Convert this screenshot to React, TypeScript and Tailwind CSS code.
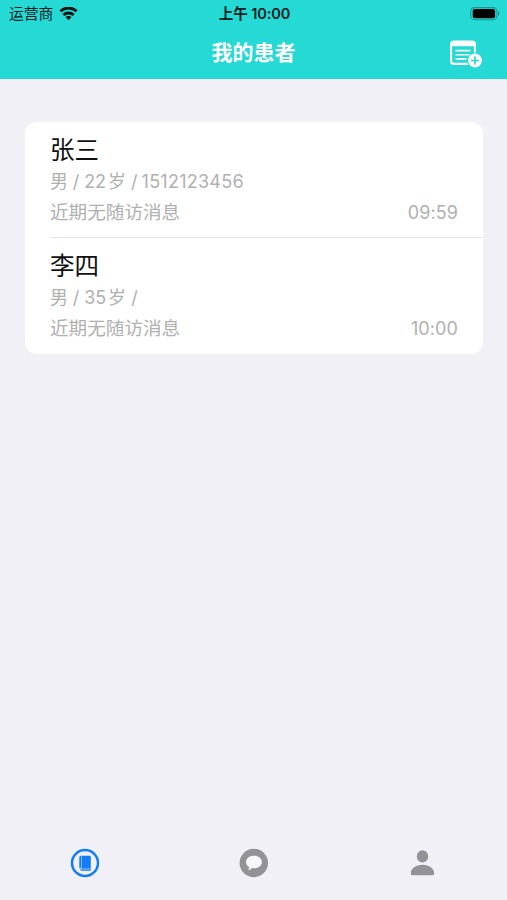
import React from 'react';

interface Patient {
  id: number;
  name: string;
  gender: string;
  age: string;
  phone: string;
  message: string;
  time: string;
}

const patients: Patient[] = [
  { id: 1, name: '张三', gender: '男', age: '22', phone: '1512123456', message: '近期无随访消息', time: '09:59' },
  { id: 2, name: '李四', gender: '男', age: '35', phone: '', message: '近期无随访消息', time: '10:00' },
];

const WifiIcon: React.FC = () => (
  <svg width="20" height="14" viewBox="0 0 20 14" fill="none" stroke="#041514" strokeWidth="2.9">
    <path d="M1.4 4.3C6.2 -0.1 12.8 -0.1 17.6 4.3" />
    <path d="M4.3 8c3-2.7 7.4-2.7 10.4 0" />
    <path d="M9.5 13.2 6.4 10.100c1.800-1.500 4.400-1.500 6.200 0z" fill="#041514" stroke="none" />
  </svg>
);

const BatteryIcon: React.FC = () => (
  <svg width="30" height="14" viewBox="0 0 30 14" fill="none">
    <rect x="0.7" y="0.6" width="26.2" height="12.2" rx="3.8" stroke="#159994" strokeWidth="1.1" />
    <rect x="2.7" y="2" width="22.4" height="9.2" rx="2" fill="#000" />
    <path d="M28 4.5c1.7.5 1.7 3.7 0 4.2z" fill="#118985" />
  </svg>
);

const AddRecordIcon: React.FC = () => (
  <svg width="34" height="28" viewBox="0 0 34 28" fill="none">
    <path d="M5 0.5h18A4 4 0 0 1 27 4.5V21a4 4 0 0 1-4 4H5a4 4 0 0 1-4-4V4.5A4 4 0 0 1 5 .5z" fill="#fff" />
    <path d="M3.1 6.3h21.8V20.5a2.3 2.3 0 0 1-2.3 2.3H5.4A2.3 2.3 0 0 1 3.1 20.5z" fill="#25d9d4" />
    <path d="M6.5 10.6h15M6.5 14.7h15M6.5 18.9h11" stroke="#fff" strokeWidth="1.6" />
    <circle cx="26" cy="20.5" r="7.9" fill="#25d9d4" />
    <circle cx="26" cy="20.5" r="6.9" fill="#fff" />
    <path d="M22 20.5h8M26 16.5v8" stroke="#25d9d4" strokeWidth="1.7" />
  </svg>
);

const PatientsTabIcon: React.FC = () => (
  <svg width="30" height="30" viewBox="0 0 30 30" fill="none">
    <circle cx="15" cy="15" r="13" stroke="#127df5" strokeWidth="2.5" />
    <path d="M11.2 7.8h8.3a1.3 1.3 0 0 1 1.3 1.3V20H11.5a1.5 1.5 0 0 0-2.2 1V9.5A1.7 1.7 0 0 1 11.2 7.8z" fill="#127df5" />
    <path d="M11.5 8v11.8" stroke="#c9defa" strokeWidth="0.6" />
    <path d="M20.4 20.8H11.5c-1.3 0-1.3 1.5 0 1.5h8.9z" fill="#8dbff8" stroke="#127df5" strokeWidth="0.9" />
  </svg>
);

const MessagesTabIcon: React.FC = () => (
  <svg width="30" height="30" viewBox="0 0 30 30">
    <circle cx="14.8" cy="15" r="14.2" fill="#929297" />
    <path
      d="M15 7.7c-4.6 0-8 2.7-8 6.2 0 2.3 1.3 4.2 3.2 5.2.1 1.1-.5 2.2-1.2 3.1 1.8-.2 3.3-.9 4.4-2.1.5.1 1 .1 1.6.1 4.6 0 7.9-2.7 7.9-6.300S19.6 7.7 15 7.7z"
      fill="#f7f6fa"
    />
  </svg>
);

const ProfileTabIcon: React.FC = () => (
  <svg width="30" height="30" viewBox="0 0 30 30" fill="#929297">
    <ellipse cx="14.5" cy="8.4" rx="5.7" ry="6.1" />
    <path d="M2.8 25.5c0-5.2 5.2-8.7 11.7-8.7s11.7 3.5 11.7 8.7c0 1.2-.7 1.8-2 1.8H4.8c-1.3 0-2-.6-2-1.8z" />
  </svg>
);

const PatientRow: React.FC<{ patient: Patient; divided: boolean }> = ({ patient, divided }) => (
  <li className={divided ? 'ml-[25px] h-[116px] border-b border-[#e4e4e6] pr-[25px]' : 'ml-[25px] h-[116px] pr-[25px]'}>
    <h2 className="h-[45px] pt-[10px] text-[24.5px] leading-9 text-[#111]">{patient.name}</h2>
    <p className="flex h-[29px] items-center whitespace-pre text-[18px] text-[#b0b0b0]">
      <span className="tracking-[-0.1px]">{patient.gender} / {patient.age}</span>
      <span className="ml-0.5">岁</span>
      <span> / </span>
      <span className="-ml-px tracking-[0.25px]">{patient.phone}</span>
    </p>
    <div className="flex h-[33px] items-center justify-between text-[#b0b0b0]">
      <span className="text-[18.6px]">{patient.message}</span>
      <span className="text-[18px] tracking-[0.1px]">{patient.time}</span>
    </div>
  </li>
);

export default function App() {
  return (
    <div className="flex h-[900px] w-[507px] flex-col overflow-hidden bg-[#f1f0f6] font-['Inter','Noto_Sans_CJK_SC',sans-serif]">
      <header className="h-[79px] shrink-0 bg-[#25d9d4]">
        <div className="grid h-7 grid-cols-3 items-center pl-[9px] pr-[7px] text-[#04201f]">
          <div className="flex items-center gap-1.5">
            <span className="text-[14.8px]">运营商</span>
            <WifiIcon />
          </div>
          <span className="text-center text-[14.5px] font-semibold tracking-[-0.1px]">上午 10:00</span>
          <div className="flex justify-end">
            <BatteryIcon />
          </div>
        </div>
        <div className="grid h-[51px] grid-cols-3 items-center px-6">
          <h1 className="col-start-2 pb-px text-center text-[21px] font-bold leading-[48px] text-white">我的患者</h1>
          <button type="button" aria-label="新增患者" className="justify-self-end">
            <AddRecordIcon />
          </button>
        </div>
      </header>

      <main className="flex-1 px-[25px] pt-[43px]">
        <ul className="w-[458px] rounded-xl bg-white">
          {patients.map((patient, index) => (
            <PatientRow key={patient.id} patient={patient} divided={index < patients.length - 1} />
          ))}
        </ul>
      </main>

      <nav className="grid h-[74px] shrink-0 grid-cols-3 items-center justify-items-center">
        <button type="button" aria-label="患者"><PatientsTabIcon /></button>
        <button type="button" aria-label="消息"><MessagesTabIcon /></button>
        <button type="button" aria-label="我的"><ProfileTabIcon /></button>
      </nav>
    </div>
  );
}
